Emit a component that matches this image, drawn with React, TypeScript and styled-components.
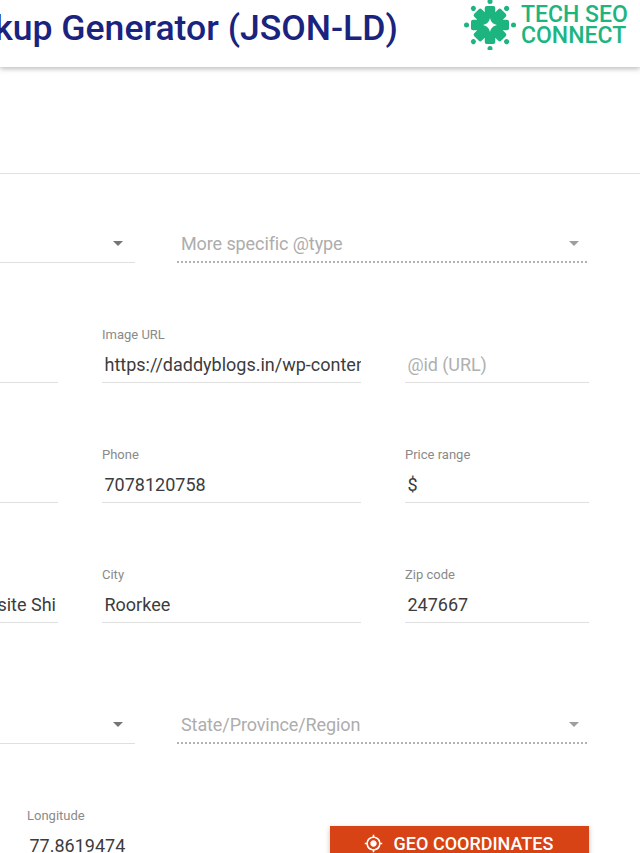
import styled, { createGlobalStyle } from "styled-components";
import { MdGpsFixed } from "react-icons/md";

const GlobalStyle = createGlobalStyle`
  html, body {
    margin: 0;
    padding: 0;
    height: 100%;
    overflow: hidden;
    background: #fff;
    font-family: Roboto, "Liberation Sans", sans-serif;
  }
`;

const Page = styled.div`
  width: 640px;
  height: 853px;
  overflow: hidden;
`;

const Header = styled.header`
  height: 67px;
  display: flex;
  align-items: center;
  justify-content: flex-end;
  padding-right: 13px;
  box-sizing: border-box;
  background: #fff;
  box-shadow: 0 2px 5px rgba(0, 0, 0, 0.26);
  overflow: hidden;
  position: relative;
`;

const Title = styled.h1`
  margin: 0 66px 11px 0;
  flex-shrink: 0;
  font-size: 35.6px;
  line-height: 44px;
  font-weight: 500;
  color: #1a237e;
  white-space: nowrap;
`;

const Logo = styled.div`
  display: flex;
  align-items: center;
  gap: 5px;
  margin-bottom: 17px;
  flex-shrink: 0;
`;

const LogoText = styled.div`
  width: 106px;
  padding-top: 1px;
  font-size: 23px;
  line-height: 20.5px;
  font-weight: 500;
  color: #1db57f;
  white-space: nowrap;
`;

const Band = styled.div`
  height: 106px;
  border-bottom: 1px solid #e0e0e0;
`;

const Form = styled.form`
  padding: 53px 51px 0 0;
  display: flex;
  flex-direction: column;
  gap: 64px;
`;

const Row = styled.div<{ $gap?: number; $after?: number }>`
  display: flex;
  justify-content: flex-end;
  gap: ${(p) => p.$gap ?? 44}px;
  margin-bottom: ${(p) => p.$after ?? 0}px;
`;

const Field = styled.div<{ $w: number }>`
  width: ${(p) => p.$w}px;
  flex-shrink: 0;
`;

const Label = styled.label`
  display: block;
  height: 14px;
  font-size: 13px;
  line-height: 16px;
  color: #8a8a8a;
`;

const Value = styled.div<{ $alignEnd?: boolean; $muted?: boolean }>`
  height: 42px;
  box-sizing: border-box;
  padding: 8px 2px 0 2.5px;
  display: flex;
  justify-content: ${(p) => (p.$alignEnd ? "flex-end" : "flex-start")};
  overflow: hidden;
  white-space: nowrap;
  font-size: 18px;
  line-height: 31px;
  letter-spacing: ${(p) => (p.$muted ? "-0.1px" : "0")};
  color: ${(p) => (p.$muted ? "#b0b0b0" : "#3c3c3c")};
  border-bottom: 1px solid #e0e0e0;
`;

const Select = styled.div<{ $w: number; $disabled?: boolean }>`
  width: ${(p) => p.$w}px;
  height: 36px;
  flex-shrink: 0;
  box-sizing: border-box;
  padding: 0 ${(p) => (p.$disabled ? 10 : 12)}px 3px 4px;
  display: flex;
  align-items: center;
  justify-content: space-between;
  font-size: 18px;
  letter-spacing: -0.1px;
  color: #adadad;
  ${(p) =>
    p.$disabled
      ? `background-image: linear-gradient(to right, rgba(0,0,0,.3) 0%, rgba(0,0,0,.3) 50%, transparent 0%);
         background-size: 4px 2px;
         background-repeat: repeat-x;
         background-position: 0 bottom;`
      : "border-bottom: 1px solid #e0e0e0;"}
`;

const Arrow = styled.span<{ $disabled?: boolean }>`
  width: 0;
  height: 0;
  border-left: 5px solid transparent;
  border-right: 5px solid transparent;
  border-top: 5px solid ${(p) => (p.$disabled ? "#9e9e9e" : "#757575")};
`;

const GeoButton = styled.button`
  width: 259px;
  height: 36px;
  flex-shrink: 0;
  margin-top: 18px;
  border: 0;
  padding: 0 2px 1px 0;
  display: flex;
  align-items: center;
  justify-content: center;
  gap: 11px;
  background: #d84315;
  color: #fff;
  font-family: inherit;
  font-size: 18px;
  font-weight: 500;
  box-shadow: 0 2px 5px rgba(0, 0, 0, 0.26);
`;

function LogoMark() {
  const dots = [0, 45, 90, 135, 180, 225, 270, 315];
  return (
    <svg width="52" height="50" viewBox="0 0 52 50" aria-hidden="true">
      <g transform="translate(26 25)" fill="#1db57f">
        <circle r="14" />
        {dots.slice(0, 4).map((a) => (
          <rect key={a} x="-5.25" y="-19" width="10.5" height="38" rx="2" transform={`rotate(${a})`} />
        ))}
        {dots.map((a) => (
          <circle key={a} cx="0" cy="-23.5" r="2.5" transform={`rotate(${a})`} />
        ))}
        <path d="M0 -7 C1 -3 3 -1 7 0 C3 1 1 3 0 7 C-1 3 -3 1 -7 0 C-3 -1 -1 -3 0 -7Z" fill="#fff" />
      </g>
    </svg>
  );
}

export default function App() {
  return (
    <Page>
      <GlobalStyle />
      <Header>
        <Title>Schema Markup Generator (JSON-LD)</Title>
        <Logo>
          <LogoMark />
          <LogoText>
            TECH SEO
            <br />
            CONNECT
          </LogoText>
        </Logo>
      </Header>
      <Band />
      <Form>
        <Row $gap={42}>
          <Select $w={300}>
            <span />
            <Arrow />
          </Select>
          <Select $w={412} $disabled>
            More specific @type
            <Arrow $disabled />
          </Select>
        </Row>
        <Row>
          <Field $w={200}>
            <Label />
            <Value />
          </Field>
          <Field $w={259}>
            <Label>Image URL</Label>
            <Value>https://daddyblogs.in/wp-content/uploads/logo.png</Value>
          </Field>
          <Field $w={184}>
            <Label />
            <Value $muted>@id (URL)</Value>
          </Field>
        </Row>
        <Row>
          <Field $w={200}>
            <Label />
            <Value />
          </Field>
          <Field $w={259}>
            <Label>Phone</Label>
            <Value>7078120758</Value>
          </Field>
          <Field $w={184}>
            <Label>Price range</Label>
            <Value>$</Value>
          </Field>
        </Row>
        <Row $after={21}>
          <Field $w={200}>
            <Label />
            <Value $alignEnd>Opposite Shi</Value>
          </Field>
          <Field $w={259}>
            <Label>City</Label>
            <Value>Roorkee</Value>
          </Field>
          <Field $w={184}>
            <Label>Zip code</Label>
            <Value>247667</Value>
          </Field>
        </Row>
        <Row $gap={42}>
          <Select $w={300}>
            <span />
            <Arrow />
          </Select>
          <Select $w={412} $disabled>
            State/Province/Region
            <Arrow $disabled />
          </Select>
        </Row>
        <Row>
          <Field $w={259}>
            <Label>Longitude</Label>
            <Value>77.8619474</Value>
          </Field>
          <GeoButton type="button">
            <MdGpsFixed size={19} />
            GEO COORDINATES
          </GeoButton>
        </Row>
      </Form>
    </Page>
  );
}
